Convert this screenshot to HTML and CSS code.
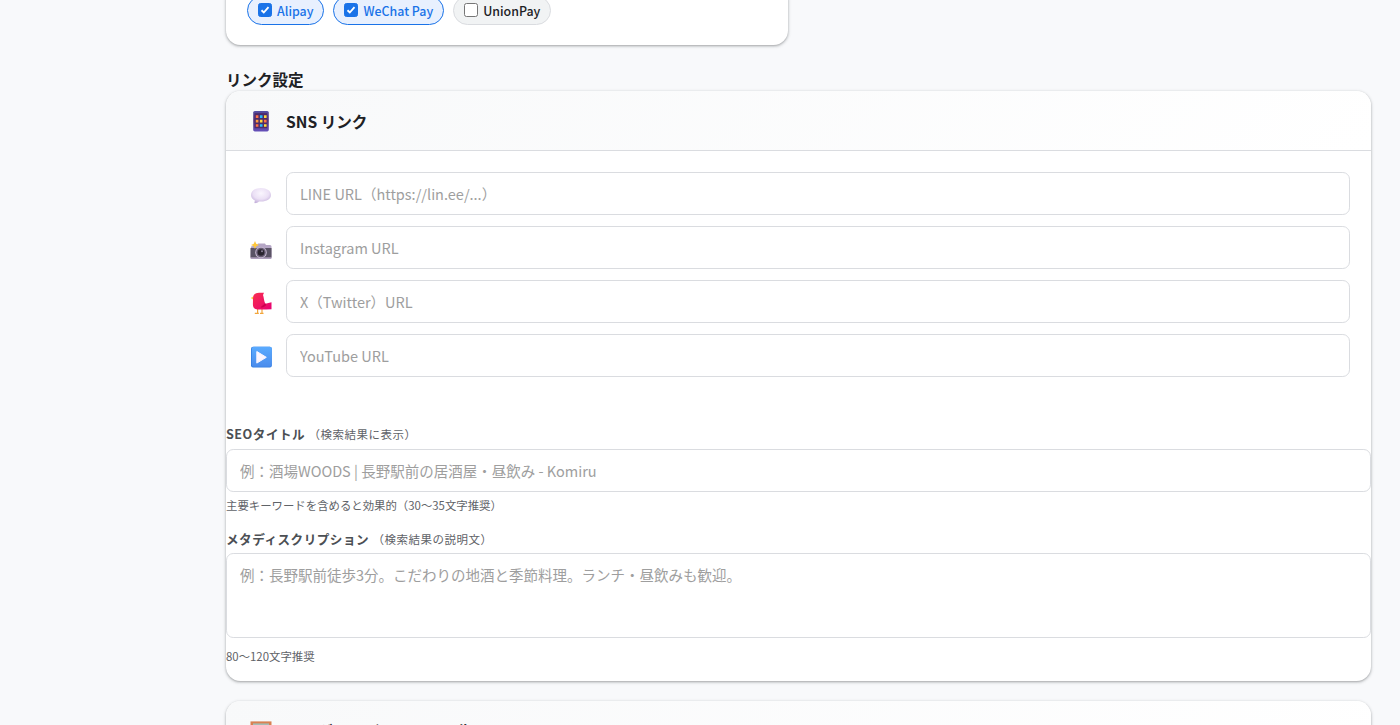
FILE: index.html
```html
<!DOCTYPE html>
<html lang="ja">
<head>
<meta charset="utf-8">
<title>リンク設定</title>
<link rel="stylesheet" href="styles.css">
</head>
<body>
<main class="page">
  <section class="card payments">
    <label class="chip on"><span class="box"><svg viewBox="0 0 13 13"><path d="M2.7 6.8 5.2 9.2 10.3 3.5"/></svg></span>Alipay</label>
    <label class="chip on"><span class="box"><svg viewBox="0 0 13 13"><path d="M2.7 6.8 5.2 9.2 10.3 3.5"/></svg></span>WeChat Pay</label>
    <label class="chip"><span class="box"></span>UnionPay</label>
  </section>

  <h2 class="section-title">リンク設定</h2>

  <section class="card links">
    <header class="card-head">
      <svg class="icon" viewBox="0 0 22 22">
        <defs><linearGradient id="phone" x2="0" y2="1"><stop stop-color="#5550a4"/><stop offset=".45" stop-color="#563277"/><stop offset="1" stop-color="#6551bb"/></linearGradient></defs>
        <rect x="3.2" y="1" width="15.6" height="20.4" rx="1.6" fill="url(#phone)"/>
        <rect x="4.6" y="3.2" width="12.5" height="15" fill="#4d2b68"/>
        <g fill="#ff7145"><path d="M5.8 5.3h2.6v2.6H5.8zM14 9.8h2.6v2.6H14zM5.8 14.2h2.6v2.6H5.8z"/></g>
        <g fill="#ffd83b"><path d="M14 5.3h2.6v2.6H14zM9.9 9.8h2.6v2.6H9.9zM14 14.2h2.6v2.6H14z"/></g>
        <g fill="#27bdff"><path d="M9.9 5.3h2.6v2.6H9.9zM9.9 14.2h2.6v2.6H9.9z"/></g>
        <path fill="#ff9c3e" d="M5.8 9.8h2.6v2.6H5.8z"/>
      </svg>
      <h3 class="card-title">SNS リンク</h3>
    </header>
    <div class="rows">
      <div class="row">
        <svg class="icon" viewBox="0 0 22 22">
          <defs><radialGradient id="bubble" cx=".5" cy=".35" r=".65"><stop stop-color="#faf6fe"/><stop offset=".6" stop-color="#ebe0f5"/><stop offset="1" stop-color="#c6b3dc"/></radialGradient></defs>
          <path fill="url(#bubble)" d="M11 4C5.200 4 1 7 1 11c0 2.400 1.500 4.300 3.900 5.500-.2 1.200-.7 2.100-.4 2.600 1.300.2 3.300-.6 4.500-1.600l2 .1c5.800 0 10-2.700 10-6.600S16.800 4 11 4z"/>
        </svg>
        <input class="field" placeholder="LINE URL（https://lin.ee/...）">
      </div>
      <div class="row">
        <svg class="icon camera" viewBox="0 0 22 22">
          <path fill="#b5a6c5" d="M1 6.500 7 5l1-1.500h7L16 5h4q1.500 0 1.500 1.500V18q0 1-1 1h-19q-1 0-1-1z"/>
          <path fill="#5a5365" d="M.5 8h21v9H.5z"/>
          <path fill="#94869f" d="M.5 17h21v1.200H.5z"/>
          <circle cx="11" cy="12.500" r="5.800" fill="#c4b7cf"/><circle cx="11" cy="12.500" r="4.800" fill="#675c73"/><circle cx="11" cy="12.500" r="3.300" fill="#29242e"/><circle cx="12" cy="11.300" r="1" fill="#8d839a"/>
          <path fill="#ffc83d" d="m5 1 1.200 2.800L9 5 6.200 6.200 5 9 3.800 6.200 1 5l2.800-1.200z"/>
        </svg>
        <input class="field" placeholder="Instagram URL">
      </div>
      <div class="row">
        <svg class="icon" viewBox="0 0 22 22">
          <defs><linearGradient id="bird" x2="1" y2="1"><stop stop-color="#f92f50"/><stop offset="1" stop-color="#e60073"/></linearGradient></defs>
          <path fill="#ffce43" d="M3.200 4.500.8 6.100l2.600 1.600z"/>
          <path fill="none" stroke="#f2a63c" stroke-width="1.200" d="M7.600 17v4.200M12 17v4.200M4.800 21.400h4M10 21.400h3.500"/>
          <path fill="url(#bird)" d="M3 6.500C3 2.500 5.500.8 9 .8h5l-1 2.200c1 2.800.8 5.500 2.300 8.800l6.200-1.600v7L16 17.500H7.500C4 17.500 2.800 15 2.900 12z"/>
          <path fill="#cc004e" d="m15.300 11.300-4.800 3.900c2 .8 4.200-.2 5.700-2.200z"/>
        </svg>
        <input class="field" placeholder="X（Twitter）URL">
      </div>
      <div class="row">
        <svg class="icon" viewBox="0 0 22 22">
          <defs><linearGradient id="play" x2="0" y2="1"><stop stop-color="#5aabff"/><stop offset="1" stop-color="#4b8cec"/></linearGradient></defs>
          <rect x="1" y=".8" width="20.800" height="20.800" rx="2" fill="#327ee2"/>
          <rect x="1.800" y=".8" width="20" height="20" rx="2" fill="url(#play)"/>
          <path fill="#fbf6ff" stroke="#fbf6ff" stroke-linejoin="round" d="M6.800 5.500v11.600l9.500-5.800z"/>
        </svg>
        <input class="field" placeholder="YouTube URL">
      </div>
    </div>
    <div class="seo">
      <label class="seo-label">SEOタイトル <span class="sub">（検索結果に表示）</span></label>
      <input class="field" placeholder="例：酒場WOODS | 長野駅前の居酒屋・昼飲み - Komiru">
      <p class="hint">主要キーワードを含めると効果的（30〜35文字推奨）</p>
      <label class="seo-label second">メタディスクリプション <span class="sub">（検索結果の説明文）</span></label>
      <textarea class="field area" placeholder="例：長野駅前徒歩3分。こだわりの地酒と季節料理。ランチ・昼飲みも歓迎。"></textarea>
      <p class="hint last">80〜120文字推奨</p>
    </div>
  </section>

  <section class="card gallery">
    <header class="card-head">
      <svg class="icon" viewBox="0 0 22 22"><path fill="#d98152" d="M.5 1.400h21v20H.5z"/><path fill="#a6bdb5" d="M3 3.400h16v16H3z"/></svg>
      <h3 class="card-title">ヘッダー・ギャラリー画像</h3>
    </header>
  </section>
</main>
</body>
</html>
```
FILE: styles.css
```css
* { box-sizing: border-box; }
html { overflow: hidden; }
body {
  margin: 0;
  height: 725px;
  overflow: hidden;
  background: #f8f9fb;
  color: #202124;
  font-family: "Noto Sans CJK JP", sans-serif;
  font-size: 14.5px;
}
.page {
  display: flex;
  flex-direction: column;
  height: 725px;
  overflow: hidden;
  padding: 0 29px 0 226px;
}
.card {
  background: #fff;
  border-radius: 14.4px;
  box-shadow: 0 1px 2px rgba(60, 64, 67, .3), 0 1px 3px 1px rgba(60, 64, 67, .15);
  flex: none;
}
.payments {
  display: flex;
  align-items: flex-start;
  gap: 9px;
  width: 562px;
  height: 60px;
  margin-top: -15px;
  padding: 11px 21px;
}
.chip {
  display: flex;
  align-items: center;
  gap: 5px;
  height: 29px;
  padding: 0 10px;
  border: 1px solid #dadce0;
  border-radius: 15px;
  background: #f1f3f4;
  font-size: 12.4px;
  font-weight: 500;
  white-space: nowrap;
}
.chip.on { background: #e8f0fe; border-color: #1a73e8; color: #1a73e8; }
.box {
  display: flex;
  width: 14px;
  height: 14px;
  margin-top: -2px;
  border: 1px solid #767676;
  border-radius: 2.5px;
  background: #fff;
}
.on .box { background: #1a73e8; border-color: #1a73e8; }
.box svg { width: 12px; height: 12px; fill: none; stroke: #fff; stroke-width: 2; }
.section-title {
  flex: none;
  margin: 23px 0 0;
  height: 23px;
  font-size: 15.5px;
  line-height: 23px;
  font-weight: 700;
}
.links { height: 590px; overflow: hidden; }
.card-head {
  display: flex;
  align-items: center;
  gap: 14px;
  height: 60px;
  padding: 0 24px;
  border-bottom: 1px solid #dadce0;
  border-radius: 14.4px 14.4px 0 0;
  background: linear-gradient(135deg, #f8f9fa, #fff);
}
.icon { flex: none; width: 22px; height: 22px; }
.card-title { margin: 1px 0 0; font-size: 15.6px; font-weight: 700; }
.rows {
  display: flex;
  flex-direction: column;
  gap: 11px;
  padding: 21px 21px 0 24px;
}
.row { display: flex; align-items: center; gap: 14px; height: 43px; }
.row .icon { margin-top: 3px; }
.row .camera { margin-top: 7px; }
.field {
  display: block;
  width: 100%;
  height: 43px;
  padding: 0 13px;
  border: 1px solid #dadce0;
  border-radius: 7.2px;
  background: #fff;
  font: inherit;
}
.field::placeholder { color: #9e9e9e; opacity: 1; }
.seo { padding-top: 47px; }
.seo-label {
  display: block;
  height: 25px;
  color: #4b4f54;
  font-size: 12.6px;
  line-height: 19px;
  font-weight: 700;
  letter-spacing: .5px;
}
.sub { font-size: 11.5px; font-weight: 400; color: #5f6368; }
.hint {
  margin: 5px 0 0;
  height: 17px;
  color: #5f6368;
  font-size: 11.4px;
  line-height: 17px;
}
.second { margin-top: 15px; height: 24px; }
.area { height: 85px; padding-top: 10px; resize: none; }
.last { margin-top: 10px; }
.gallery { margin-top: 20px; height: 100px; }
```
